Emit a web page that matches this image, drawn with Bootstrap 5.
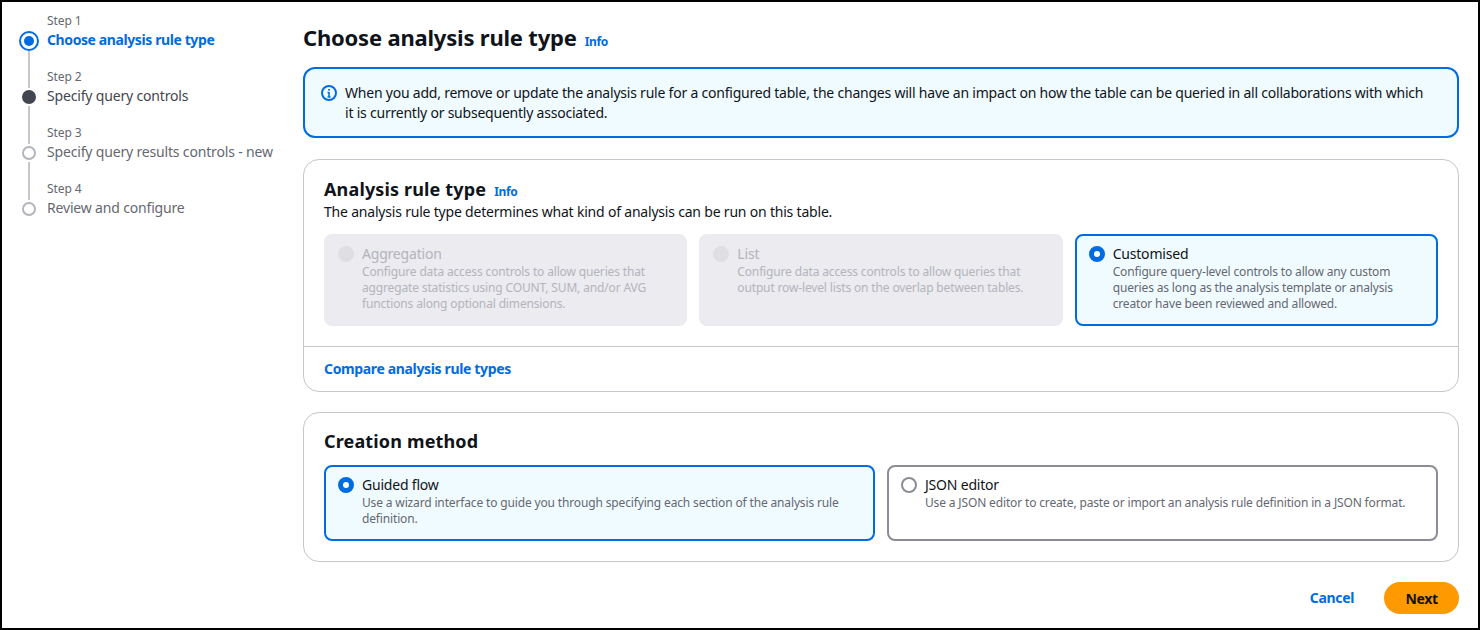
<!DOCTYPE html>
<html lang="en">
<head>
  <meta charset="UTF-8" />
  <title>Choose analysis rule type</title>
  <link rel="stylesheet" href="https://cdn.jsdelivr.net/npm/bootstrap@5.3.0/dist/css/bootstrap.min.css" />
  <style>
    html, body { height: 100%; }
    body {
      font-family: "Noto Sans", Roboto, sans-serif;
      font-size: 14px;
      line-height: 20px;
      letter-spacing: -0.2px;
      color: #0f141a;
      background: #fff;
    }
    a { color: #006ce0; font-weight: 700; letter-spacing: -0.35px; text-decoration: none; }

    /* outer frame of the screenshot */
    .page-frame {
      width: 1480px;
      height: 630px;
      border: 2px solid #000;
      overflow: hidden;
    }

    /* wizard steps */
    .wizard-nav { width: 301px; padding: 11px 0 0 17px; flex: none; }
    .wizard-step { height: 56px; }
    .step-rail { width: 20px; margin-right: 8px; }
    .step-line { width: 2px; flex: 1; background: #c6c6cd; }
    .step-line.blank { background: transparent; }
    .step-dot { width: 14px; height: 14px; margin: 2px 0; border-radius: 50%; border: 2px solid #b4b4bb; background: #fff; flex: none; }
    .step-dot.done { background: #424650; border-color: #424650; }
    .step-dot.current { width: 20px; height: 20px; margin: 0; border: 2px solid #006ce0; padding: 3px; background: #006ce0; background-clip: content-box; }
    .step-label { font-size: 12px; line-height: 16px; letter-spacing: -0.1px; color: #656871; }
    .step-title { color: #656871; line-height: 20px; margin-top: 1px; white-space: nowrap; letter-spacing: -0.17px; }
    .step-title.done { color: #424650; }
    .step-title.current { color: #006ce0; font-weight: 700; letter-spacing: -0.4px; }

    /* main column */
    .wizard-main { width: 1156px; padding-top: 20px; flex: none; }
    .page-title { font-size: 22px; line-height: 30px; font-weight: 700; letter-spacing: -0.2px; margin: 0; }
    .info-link { font-size: 12px; line-height: 16px; margin-left: 8px; }
    .info-box {
      margin-top: 15px;
      height: 71px;
      padding: 14px 24px 14px 16px;
      border: 2px solid #006ce0;
      border-radius: 12px;
      background: #f0fbff;
      letter-spacing: -0.22px;
    }
    .info-box svg { flex: none; margin: 2px 8px 0 0; }

    .panel-box { border: 1px solid #c6c6cd; border-radius: 16px; }
    .panel-title { font-size: 18px; line-height: 22px; font-weight: 700; letter-spacing: 0.15px; margin: 0; }
    .panel-body { padding: 18px 20px 20px; }
    .panel-body.tight { padding-top: 17px; }
    .panel-first { margin-top: 21px; }
    .panel-next { margin-top: 20px; }
    .panel-text { margin: 2px 0 12px; }
    .panel-gap { margin-bottom: 13px; }

    /* radio tiles */
    .tile-grid { display: grid; gap: 12px; }
    .tile-grid.three { grid-template-columns: repeat(3, 1fr); }
    .tile-grid.two { grid-template-columns: repeat(2, 1fr); }
    .radio-tile {
      display: flex;
      padding: 8px 12px 12px;
      border: 2px solid #8c8c94;
      border-radius: 8px;
      font-size: 14px;
    }
    .radio-tile.on { border-color: #006ce0; background: #f0fbff; }
    .radio-tile.off { border-color: #ebebf0; background: #ebebf0; color: #b4b4bb; }
    .radio-tile .tile-note { display: block; font-size: 12px; line-height: 16px; letter-spacing: -0.15px; color: #656871; }
    .radio-tile.off .tile-note { color: #b4b4bb; }
    .tile-radio {
      appearance: none;
      flex: none;
      width: 16px;
      height: 16px;
      margin: 2px 8px 0 0;
      border-radius: 50%;
      border: 2px solid #8c8c94;
      background: #fff;
    }
    .tile-radio:checked { border: 5px solid #006ce0; }
    .tile-radio:disabled { border-color: #dedee3; background: #dedee3; }

    .panel-foot { border-top: 1px solid #c6c6cd; padding: 12px 20px 12px; }

    .action-row { margin-top: 20px; gap: 30px; }
    .next-btn {
      width: 75px;
      height: 32px;
      padding: 0;
      border: 0;
      border-radius: 16px;
      background: #f90;
      color: #0f141a;
      font-size: 14px;
      font-weight: 700;
      letter-spacing: -0.35px;
    }
  </style>
</head>
<body class="m-0">
  <div class="page-frame d-flex">
    <nav class="wizard-nav">
      <div class="wizard-step d-flex">
        <div class="step-rail d-flex flex-column align-items-center">
          <div class="step-line blank"></div>
          <div class="step-dot current"></div>
          <div class="step-line"></div>
        </div>
        <div>
          <div class="step-label">Step 1</div>
          <div class="step-title current">Choose analysis rule type</div>
        </div>
      </div>
      <div class="wizard-step d-flex">
        <div class="step-rail d-flex flex-column align-items-center">
          <div class="step-line"></div>
          <div class="step-dot done"></div>
          <div class="step-line"></div>
        </div>
        <div>
          <div class="step-label">Step 2</div>
          <div class="step-title done">Specify query controls</div>
        </div>
      </div>
      <div class="wizard-step d-flex">
        <div class="step-rail d-flex flex-column align-items-center">
          <div class="step-line"></div>
          <div class="step-dot"></div>
          <div class="step-line"></div>
        </div>
        <div>
          <div class="step-label">Step 3</div>
          <div class="step-title">Specify query results controls - new</div>
        </div>
      </div>
      <div class="wizard-step d-flex">
        <div class="step-rail d-flex flex-column align-items-center">
          <div class="step-line"></div>
          <div class="step-dot"></div>
          <div class="step-line blank"></div>
        </div>
        <div>
          <div class="step-label">Step 4</div>
          <div class="step-title">Review and configure</div>
        </div>
      </div>
    </nav>

    <main class="wizard-main">
      <div class="d-flex align-items-baseline">
        <h1 class="page-title">Choose analysis rule type</h1>
        <a class="info-link" href="#">Info</a>
      </div>

      <div class="info-box d-flex">
        <svg width="16" height="16" viewBox="0 0 16 16" fill="none" stroke="#006ce0" stroke-width="2">
          <circle cx="8" cy="8" r="7" />
          <path d="M8 7v5M6.5 12h3M6.5 7.5H8" stroke-width="1.6" />
          <path d="M8 4v1.6" />
        </svg>
        <div>When you add, remove or update the analysis rule for a configured table, the changes will have an impact on how the table can be queried in all collaborations with which it is currently or subsequently associated.</div>
      </div>

      <section class="panel-box panel-first">
        <div class="panel-body">
          <div class="d-flex align-items-baseline">
            <h2 class="panel-title">Analysis rule type</h2>
            <a class="info-link" href="#">Info</a>
          </div>
          <p class="panel-text">The analysis rule type determines what kind of analysis can be run on this table.</p>
          <div class="tile-grid three">
            <label class="radio-tile off">
              <input class="tile-radio" type="radio" name="ruleType" disabled />
              <span>Aggregation<span class="tile-note">Configure data access controls to allow queries that aggregate statistics using COUNT, SUM, and/or AVG functions along optional dimensions.</span></span>
            </label>
            <label class="radio-tile off">
              <input class="tile-radio" type="radio" name="ruleType" disabled />
              <span>List<span class="tile-note">Configure data access controls to allow queries that output row-level lists on the overlap between tables.</span></span>
            </label>
            <label class="radio-tile on">
              <input class="tile-radio" type="radio" name="ruleType" checked />
              <span>Customised<span class="tile-note">Configure query-level controls to allow any custom queries as long as the analysis template or analysis creator have been reviewed and allowed.</span></span>
            </label>
          </div>
        </div>
        <div class="panel-foot"><a href="#">Compare analysis rule types</a></div>
      </section>

      <section class="panel-box panel-next">
        <div class="panel-body tight">
          <h2 class="panel-title panel-gap">Creation method</h2>
          <div class="tile-grid two">
            <label class="radio-tile on">
              <input class="tile-radio" type="radio" name="creation" checked />
              <span>Guided flow<span class="tile-note">Use a wizard interface to guide you through specifying each section of the analysis rule definition.</span></span>
            </label>
            <label class="radio-tile">
              <input class="tile-radio" type="radio" name="creation" />
              <span>JSON editor<span class="tile-note">Use a JSON editor to create, paste or import an analysis rule definition in a JSON format.</span></span>
            </label>
          </div>
        </div>
      </section>

      <div class="action-row d-flex justify-content-end align-items-center">
        <a href="#">Cancel</a>
        <button class="btn next-btn" type="button">Next</button>
      </div>
    </main>
  </div>
  <script src="https://cdn.jsdelivr.net/npm/bootstrap@5.3.0/dist/js/bootstrap.bundle.min.js"></script>
</body>
</html>
